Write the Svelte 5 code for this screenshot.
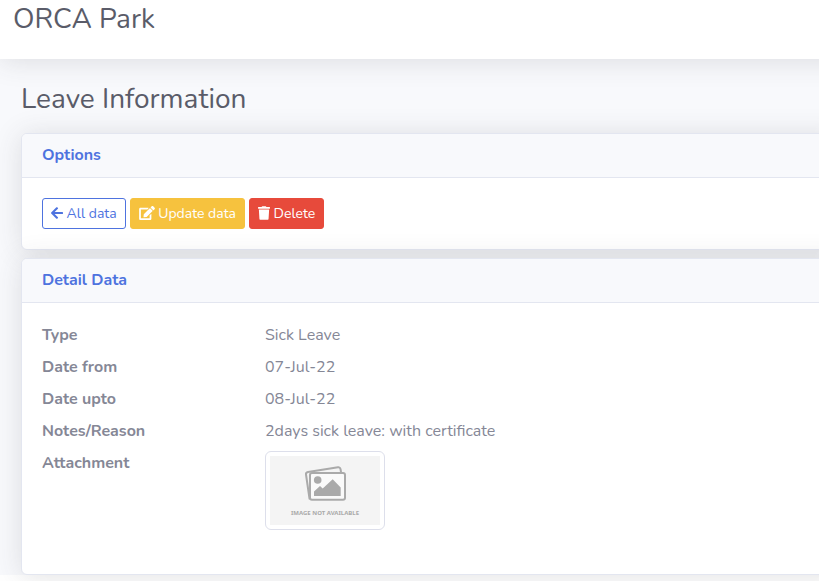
<script>
  const details = [
    ['Type', 'Sick Leave'],
    ['Date from', '07-Jul-22'],
    ['Date upto', '08-Jul-22'],
    ['Notes/Reason', '2days sick leave: with certificate']
  ];
</script>

<div class="page">
  <div class="content">
    <header class="topbar"><h2>ORCA Park</h2></header>
    <main>
      <h1>Leave Information</h1>

      <section class="card">
        <h6>Options</h6>
        <div class="body actions">
          <a class="btn outline" href="#all">
            <svg viewBox="0 0 448 512" width="12" height="14" aria-hidden="true"><path d="M257.5 445.1l-22.2 22.2c-9.4 9.4-24.6 9.4-33.9 0L7 273c-9.4-9.4-9.4-24.6 0-33.9L201.4 44.7c9.4-9.4 24.6-9.4 33.9 0l22.2 22.2c9.5 9.5 9.3 25-.4 34.3L136.6 216H424c13.3 0 24 10.7 24 24v32c0 13.3-10.7 24-24 24H136.6l120.5 114.8c9.8 9.3 10 24.8.4 34.3z" /></svg>
            All data
          </a>
          <a class="btn warning" href="#update">
            <svg viewBox="0 0 576 512" width="16" height="14" aria-hidden="true"><path d="M402.6 83.2l90.2 90.2c3.8 3.8 3.8 10 0 13.8L274.4 405.6l-92.8 10.3c-12.4 1.4-22.9-9.1-21.5-21.5l10.3-92.8L388.8 83.2c3.8-3.8 10-3.8 13.8 0zm162-22.9l-48.8-48.8c-15.2-15.2-39.9-15.2-55.2 0l-35.4 35.4c-3.8 3.8-3.8 10 0 13.8l90.2 90.2c3.8 3.8 10 3.8 13.8 0l35.4-35.4c15.2-15.3 15.2-40 0-55.2zM384 346.2V448H64V128h229.8c3.2 0 6.2-1.3 8.5-3.5l40-40c7.6-7.6 2.2-20.5-8.5-20.5H48C21.5 64 0 85.5 0 112v352c0 26.5 21.5 48 48 48h352c26.5 0 48-21.5 48-48V306.2c0-10.7-12.9-16-20.5-8.5l-40 40c-2.2 2.3-3.5 5.3-3.5 8.5z" /></svg>
            Update data
          </a>
          <button class="btn danger" type="button">
            <svg viewBox="0 0 448 512" width="12" height="14" aria-hidden="true"><path d="M432 32H312l-9.4-18.7A24 24 0 0 0 281.1 0H166.8a23.72 23.72 0 0 0-21.4 13.3L136 32H16A16 16 0 0 0 0 48v32a16 16 0 0 0 16 16h416a16 16 0 0 0 16-16V48a16 16 0 0 0-16-16zM53.2 467a48 48 0 0 0 47.9 45h245.8a48 48 0 0 0 47.9-45L416 128H32z" /></svg>
            Delete
          </button>
        </div>
      </section>

      <section class="card">
        <h6>Detail Data</h6>
        <dl class="body details">
          {#each details as [label, value]}
            <dt>{label}</dt>
            <dd>{value}</dd>
          {/each}
          <dt>Attachment</dt>
          <dd>
            <div class="thumb">
              <svg viewBox="0 0 110 69" role="img" aria-label="Image not available">
                <rect width="110" height="69" fill="#f4f4f4" />
                <g stroke="#aaa" stroke-width="2" stroke-linejoin="round" stroke-linecap="round">
                  <path d="M39.500 42.500 L36 18.500 Q35.700 16.500 38 16 L68 11.300 Q70 11 70.500 13 L71 16" fill="#f4f4f4" />
                  <rect x="40" y="17" width="35" height="26.700" rx="2" fill="#fafafa" />
                </g>
                <circle cx="47.700" cy="24" r="3.800" fill="#aaa" />
                <path d="M44 40v-4.500l6-5.500 2.700 2.500 10-9.200 8 8.200v8.500z" fill="#aaa" />
                <text x="55" y="59" text-anchor="middle">IMAGE NOT AVAILABLE</text>
              </svg>
            </div>
          </dd>
        </dl>
      </section>
    </main>
  </div>
</div>

<style>
  :global(body) {
    margin: 0;
    background: #fff;
  }
  .page {
    min-height: 100vh;
    overflow: clip;
    font-family: Nunito, Lato, 'Open Sans', sans-serif;
    font-size: 16px;
    line-height: 24px;
    color: #858796;
  }
  .content { background: #f8f9fc; }
  h1, h2, h6, dl, dd { margin: 0; }
  h1, h2 {
    font-size: 28px;
    line-height: 34px;
    font-weight: 400;
    color: #5a5c69;
  }
  .topbar {
    margin-right: -48px;
    padding: 2px 13px 23px;
    background: #fff;
    box-shadow: 0 2px 28px rgba(58, 59, 69, 0.15);
  }
  main {
    margin-right: -48px;
    padding: 23px 24px 0 21px;
  }
  h1 { margin-bottom: 17px; }
  .card {
    border: 1px solid #e3e6f0;
    border-radius: 6px;
    background: #fff;
    box-shadow: 0 2px 28px rgba(58, 59, 69, 0.15);
  }
  .card + .card { margin-top: 8px; }
  h6 {
    padding: 9px 20px 10px;
    border-bottom: 1px solid #e3e6f0;
    border-radius: 5px 5px 0 0;
    background: #f8f9fc;
    color: #4e73df;
    font-size: 16px;
    line-height: 24px;
    font-weight: 700;
  }
  .body { padding: 20px; }
  .actions {
    display: flex;
    gap: 4px;
  }
  .btn {
    padding: 4px 8px;
    border: 1px solid;
    border-radius: 3px;
    font-family: inherit;
    font-size: 14px;
    line-height: 21px;
    color: #fff;
    text-decoration: none;
    cursor: pointer;
  }
  .btn svg {
    fill: currentColor;
    vertical-align: -2px;
  }
  .outline { border-color: #4e73df; color: #4e73df; background: #fff; }
  .warning { border-color: #f6c23e; background: #f6c23e; }
  .danger { border-color: #e74a3b; background: #e74a3b; }
  .details {
    display: grid;
    grid-template-columns: 215px 1fr;
    gap: 8px;
    padding-bottom: 44px;
  }
  dt { font-weight: 700; }
  .thumb {
    box-sizing: border-box;
    width: 120px;
    padding: 4px;
    border: 1px solid #dddfeb;
    border-radius: 6px;
    background: #fff;
  }
  .thumb svg { display: block; }
  .thumb text {
    font: 700 6px 'Noto Sans', sans-serif;
    fill: #aaa;
  }
</style>
